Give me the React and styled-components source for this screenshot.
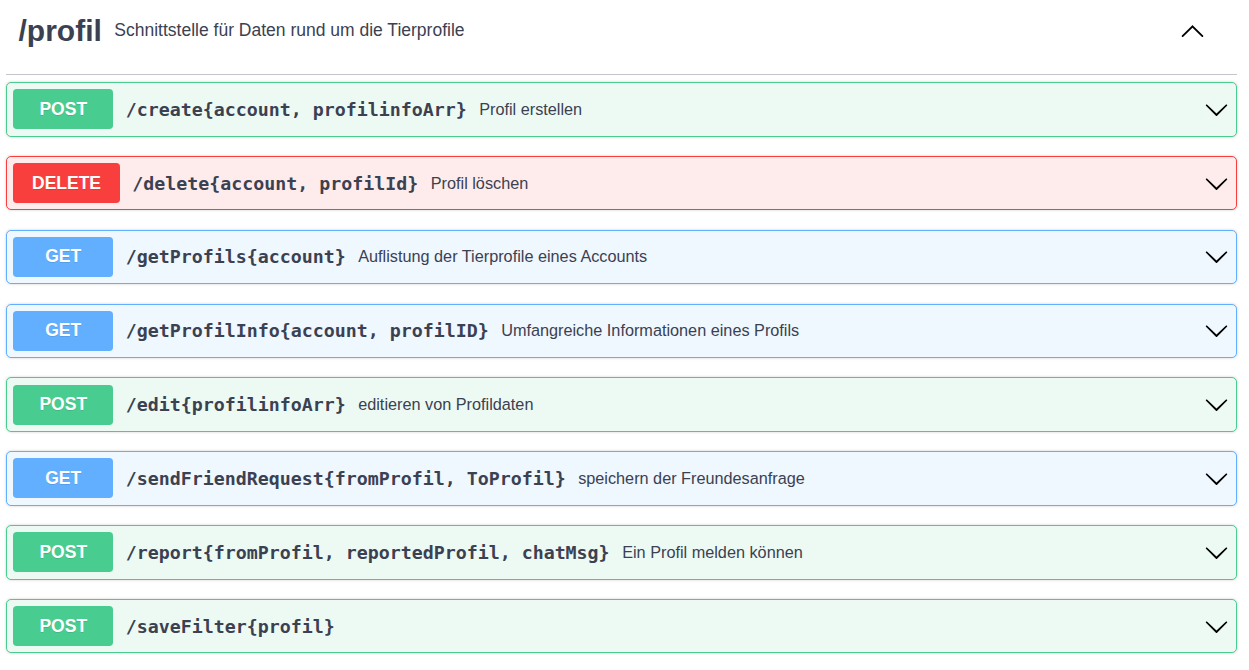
import React from 'react'
import styled, { createGlobalStyle } from 'styled-components'

const GlobalStyle = createGlobalStyle`
    body {
        margin: 0;
        background: #ffffff;
        font-family: "Liberation Sans", Arial, sans-serif;
        color: #3b4151;
    }
`

const METHOD_COLORS = {
    POST: { main: '#49cc90', bg: '#edfaf4' },
    DELETE: { main: '#f93e3e', bg: '#feecec' },
    GET: { main: '#61affe', bg: '#eff7ff' },
}

const Wrapper = styled.div`
    padding: 0 12px 0 6px;
`
const TagHeader = styled.div`
    display: flex;
    align-items: center;
    height: 37px;
    padding: 12px 32px 25px 12.5px;
    border-bottom: 1px solid #c4c6cb;
    margin-bottom: 7px;
`
const TagTitle = styled.span`
    font-size: 30px;
    font-weight: bold;
    color: #3b4151;
    line-height: 37px;
`
const TagDescription = styled.span`
    flex: 1;
    font-size: 17.5px;
    padding: 0 12.5px;
    color: #3b4151;
`
const Arrow = styled.svg`
    width: 25px;
    height: 25px;
    flex: none;
    fill: #000000;
`
const Block = styled.div`
    display: flex;
    align-items: center;
    height: 40px;
    padding: 6.25px;
    margin-bottom: 19.35px;
    border: 1px solid ${p => METHOD_COLORS[p.method].main};
    background: ${p => METHOD_COLORS[p.method].bg};
    border-radius: 5px;
    box-shadow: 0 0 3px rgba(0, 0, 0, 0.19);
`
const Method = styled.span`
    display: flex;
    align-items: center;
    justify-content: center;
    box-sizing: border-box;
    height: 40px;
    min-width: 100px;
    padding: 0 18.75px;
    border-radius: 3.75px;
    background: ${p => METHOD_COLORS[p.method].main};
    color: #ffffff;
    font-size: 17.5px;
    font-weight: bold;
    text-shadow: 0 1px 0 rgba(0, 0, 0, 0.1);
`
const Path = styled.span`
    font-family: "DejaVu Sans Mono", monospace;
    font-size: 18.27px;
    font-weight: bold;
    color: #3b4151;
    padding: 0 12.5px;
    white-space: nowrap;
`
const Description = styled.span`
    flex: 1;
    font-size: 16.25px;
    color: #3b4151;
`
const Control = styled.div`
    display: flex;
    align-items: center;
    padding-right: 1px;
`

const ArrowUp = () => (
    <Arrow viewBox="0 0 20 20">
        <path d="M17.42 14.91c.29.27.75.27 1.04 0 .29-.27.29-.7 0-.97L10.52 6.1c-.29-.27-.75-.27-1.04 0L1.55 13.94c-.29.27-.29.7 0 .97.29.27.75.27 1.04 0L10 7.75l7.42 7.16z" />
    </Arrow>
)

const ArrowDown = () => (
    <Arrow viewBox="0 0 20 20">
        <path d="M17.42 6.11c.27-.27.71-.27.98 0s.27.7 0 .97l-7.91 7.830c-.27.27-.71.27-.98 0L1.6 7.08c-.27-.27-.27-.7 0-.97.27-.27.71-.27.98 0L10 13.25l7.42-7.14z" />
    </Arrow>
)

const endpoints = [
    { method: 'POST', path: '/create{account, profilinfoArr}', text: 'Profil erstellen' },
    { method: 'DELETE', path: '/delete{account, profilId}', text: 'Profil löschen' },
    { method: 'GET', path: '/getProfils{account}', text: 'Auflistung der Tierprofile eines Accounts' },
    { method: 'GET', path: '/getProfilInfo{account, profilID}', text: 'Umfangreiche Informationen eines Profils' },
    { method: 'POST', path: '/edit{profilinfoArr}', text: 'editieren von Profildaten' },
    { method: 'GET', path: '/sendFriendRequest{fromProfil, ToProfil}', text: 'speichern der Freundesanfrage' },
    { method: 'POST', path: '/report{fromProfil, reportedProfil, chatMsg}', text: 'Ein Profil melden können' },
    { method: 'POST', path: '/saveFilter{profil}', text: '' },
]

const App = () => {
    return (
        <Wrapper>
            <GlobalStyle />
            <TagHeader>
                <TagTitle>/profil</TagTitle>
                <TagDescription>Schnittstelle für Daten rund um die Tierprofile</TagDescription>
                <ArrowUp />
            </TagHeader>
            {endpoints.map((item, index) => (
                <Block key={index} method={item.method}>
                    <Method method={item.method}>{item.method}</Method>
                    <Path>{item.path}</Path>
                    <Description>{item.text}</Description>
                    <Control>
                        <ArrowDown />
                    </Control>
                </Block>
            ))}
        </Wrapper>
    )
}

export default App
